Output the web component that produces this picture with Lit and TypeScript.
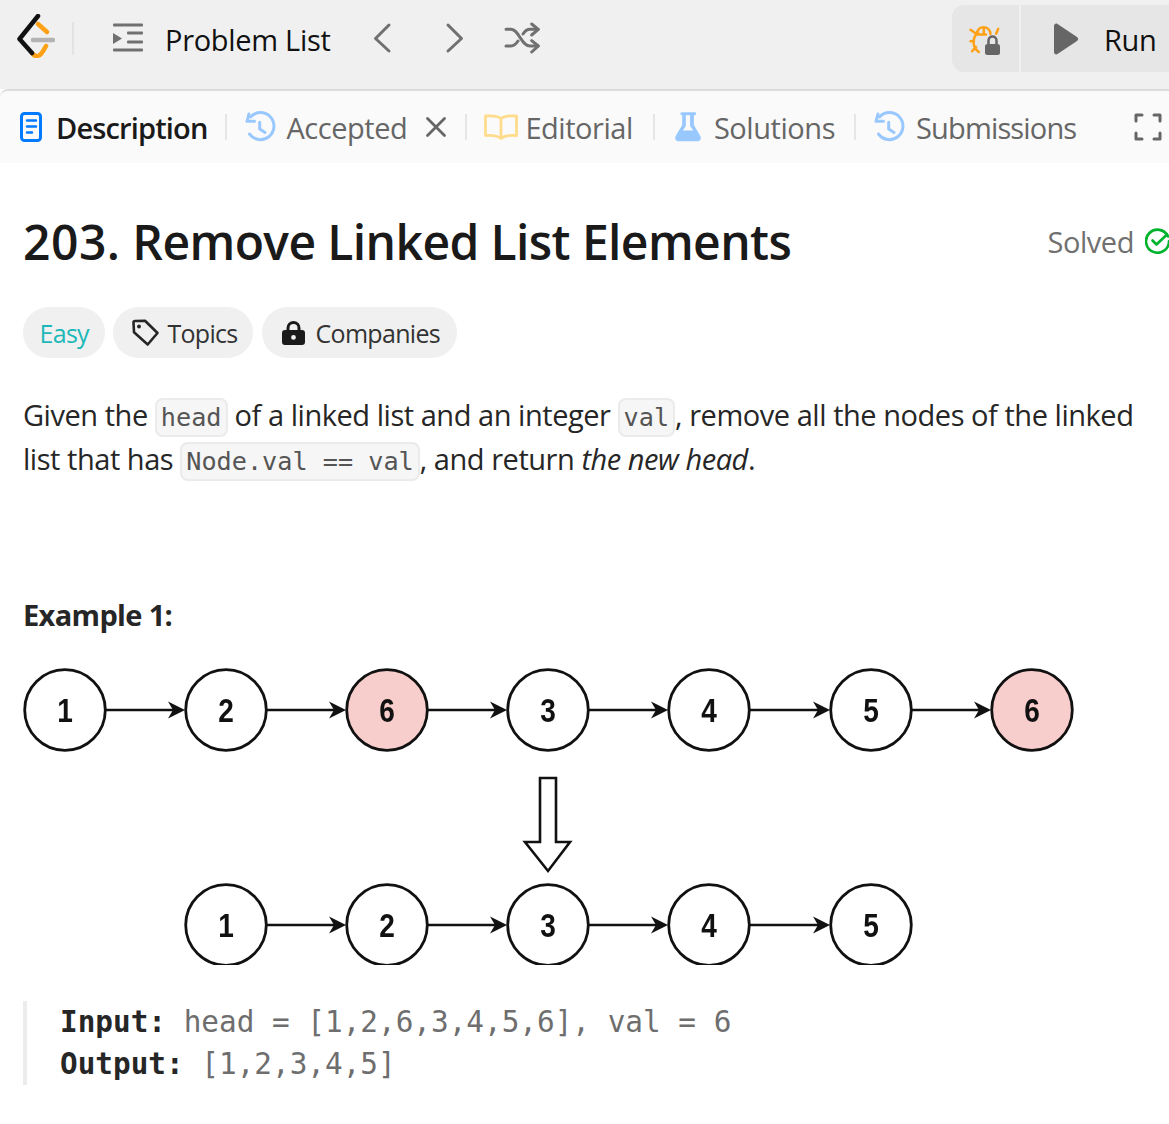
import { LitElement, css, html, svg } from 'lit'
import { customElement } from 'lit/decorators.js'

const historyIcon = html`<svg class="ic hist" width="32" height="32" viewBox="0 0 32 32" fill="none" stroke="#99c8ff" stroke-width="3" stroke-linecap="round" stroke-linejoin="round">
  <path d="M5.500 6A13.500 13.500 0 1 1 4.500 23" /><path d="M4 3 2 10.300h7.500" /><path d="M14.700 11.300V18l5.300 3.500" />
</svg>`

const nodes = (cy: number, items: [number, string, boolean?][]) => svg`
  ${items.slice(0, -1).map(([x], i) => svg`
    <line x1=${x + 41} y1=${cy} x2=${items[i + 1][0] - 50} y2=${cy} stroke="#111" stroke-width="2.600" />
    <path d="M${items[i + 1][0] - 58} ${cy - 8.5}L${items[i + 1][0] - 41} ${cy}L${items[i + 1][0] - 58} ${cy + 8.5}L${items[i + 1][0] - 53} ${cy}Z" fill="#111" />
  `)}
  ${items.map(([x, label, removed]) => svg`
    <circle cx=${x} cy=${cy} r="40.300" fill=${removed ? '#f8cecc' : '#fff'} stroke="#111" stroke-width="2.800" />
    <text transform="translate(${x} ${cy + 12}) scale(.85 1)" class="num" text-anchor="middle">${label}</text>
  `)}
`

@customElement('app-root')
export class AppRoot extends LitElement {
  static styles = css`
    :host {
      display: block;
      height: 1124px;
      overflow: hidden;
      background: #fff;
      color: #262626;
      font-family: 'Open Sans', 'Noto Sans', sans-serif;
    }

    svg { display: block; flex: none; }

    .topbar {
      display: flex;
      align-items: flex-start;
      height: 89px;
      background: #f0f0f0;
      padding: 5px 0 0 17px;
      box-sizing: border-box;
    }
    .logo { margin-top: 9px; }
    .vsep { width: 2px; height: 33px; background: #e3e3e3; margin: 17px 39px 0 17px; }
    .list-icon { margin-top: 17px; }
    .pl {
      font-size: 29px;
      font-weight: 500;
      letter-spacing: -0.3px;
      line-height: 40px;
      margin: 15px 0 0 21px;
      color: #111;
      width: 207px;
      flex: none;
    }
    .nav { margin-top: 16px; }
    .nav.next { margin-left: 53px; }
    .nav.shuffle { margin: 17px 0 0 39px; }

    .actions {
      display: flex;
      margin-left: auto;
      height: 67px;
      gap: 2px;
      width: 217px;
    }
    .actions > div {
      background: #e6e6e6;
      display: flex;
      align-items: center;
    }
    .debug { width: 67px; border-radius: 12px 0 0 12px; justify-content: center; }
    .run { flex: 1; padding-left: 30px; gap: 25px; font-size: 29px; font-weight: 500; letter-spacing: -0.3px; color: #111; }
    .run span { margin-top: 2px; }

    .tabs {
      display: flex;
      align-items: center;
      height: 74px;
      box-sizing: border-box;
      border-top: 2px solid #dcdcdc;
      border-radius: 8px 0 0 0;
      background: #fafafa;
      padding-left: 20px;
      font-size: 29px;
      letter-spacing: -0.45px;
      color: #666;
      white-space: nowrap;
    }
    .tabs .ic { margin-right: 10px; }
    .tabs .hist { margin-right: 9px; }
    .tabs .active { font-weight: 600; color: #1a1a1a; margin-left: 4px; letter-spacing: -0.85px; }
    .sep { width: 2px; height: 26px; background: #e6e6e6; margin: 0 18px; flex: none; }
    .sep.wide { margin: 0 20px; }
    .sep.last { margin-left: 19px; }
    .close { margin: 0 0 0 18px; }
    .tabs .book { margin: 0 7px 0 -1px; }
    .tabs .flask { margin-right: 13px; }
    .sub { margin-left: 1px; letter-spacing: -0.85px; }
    .full { margin-left: auto; margin-right: 7px; }

    .content { padding: 0 0 0 23px; }

    .head {
      display: flex;
      align-items: center;
      justify-content: space-between;
      margin-top: 45px;
      height: 68px;
    }
    h1 {
      margin: 0;
      font-size: 48px;
      font-weight: 600;
      letter-spacing: -0.6px;
      line-height: 68px;
      color: #1a1a1a;
      white-space: nowrap;
    }
    h1 span { letter-spacing: 0.5px; }
    .solved {
      display: flex;
      align-items: center;
      gap: 11px;
      font-size: 29px;
      letter-spacing: -0.45px;
      color: #707070;
      margin: 0 -1px 2px 0;
    }

    .tags { display: flex; gap: 8px; margin-top: 31px; }
    .tag {
      display: flex;
      align-items: center;
      gap: 7px;
      height: 51px;
      padding: 0 17px 0 19px;
      border-radius: 26px;
      background: #f0f0f0;
      font-size: 25px;
      letter-spacing: -0.7px;
      color: #333;
    }
    .tag.easy { color: #1cb8b8; padding: 0 16.500px; }
    .tag.topics { padding-right: 15px; }
    .tag.companies { margin-left: 1px; }
    .lock { margin: 0 4px 0 1px; }

    p {
      margin: 35px 0 0;
      font-size: 29px;
      line-height: 44px;
      letter-spacing: -0.46px;
      color: #262626;
    }
    code {
      font-family: 'DejaVu Sans Mono', monospace;
      font-size: 25.2px;
      line-height: 1;
      letter-spacing: 0;
      color: #555;
      background: #f6f6f6;
      border: 2px solid #ebebeb;
      border-radius: 8px;
      padding: 3px 4px;
    }
    em { font-style: italic; }

    .ex {
      margin-top: 114px;
      font-size: 29px;
      font-weight: 700;
      letter-spacing: -0.65px;
      line-height: 40px;
      color: #262626;
    }
    .diagram { margin-top: 30px; filter: blur(0.4px); }
    .num { font-family: 'Liberation Sans', Arial, sans-serif; font-weight: 700; font-size: 33px; fill: #111; }

    pre {
      margin: 36px 0 0;
      border-left: 4px solid #ececec;
      padding-left: 33px;
      font-family: 'DejaVu Sans Mono', monospace;
      font-size: 29.35px;
      line-height: 42px;
      color: #6e6e6e;
    }
    pre b { color: #262626; font-weight: 700; }
  `

  render() {
    return html`
      <div class="topbar">
        <svg class="logo" width="38" height="44" viewBox="0 0 38 44" fill="none" stroke-linecap="round" stroke-linejoin="round">
          <path d="M21 10 30 18" stroke="#ffa116" stroke-width="4.500" />
          <path d="M15 39c2 3 4.500 3.500 7 2.500 3-1.500 5-6 7-9.500" stroke="#ffa116" stroke-width="4.500" />
          <path d="M21 2 2.500 25 15 39" stroke="#111" stroke-width="4.500" />
          <path d="M16 26H36" stroke="#b3b3b3" stroke-width="4.500" />
        </svg>
        <div class="vsep"></div>
        <svg class="list-icon" width="31" height="32" viewBox="0 0 31 32" fill="#707070">
          <rect x="0" y="1.500" width="30" height="3" rx="1" />
          <rect x="14" y="9.500" width="16" height="3" rx="1" />
          <rect x="14" y="18.500" width="16" height="3" rx="1" />
          <rect x="0" y="26.500" width="30" height="3" rx="1" />
          <path d="M0 11 9 16.500 0 22Z" />
        </svg>
        <div class="pl">Problem List</div>
        <svg class="nav" width="20" height="34" viewBox="0 0 20 34" fill="none" stroke="#707070" stroke-width="3" stroke-linecap="round" stroke-linejoin="round"><path d="M17 4 3.500 17.500 17 30" /></svg>
        <svg class="nav next" width="20" height="34" viewBox="0 0 20 34" fill="none" stroke="#707070" stroke-width="3" stroke-linecap="round" stroke-linejoin="round"><path d="M3 4l13.500 13.500L3 30" /></svg>
        <svg class="nav shuffle" width="36" height="34" viewBox="0 0 36 34" fill="none" stroke="#707070" stroke-width="3" stroke-linecap="round" stroke-linejoin="round">
          <path d="M2 7.300h5c8 0 10 16.700 19 16.700h8" /><path d="M2 24h5c3 0 5-2 7-5M19 12c2-3 4-4.700 7-4.700h8" />
          <path d="M27.700 2l6.600 5.300L27.700 13" /><path d="M27.700 18.700l6.600 5.300-6.600 6" />
        </svg>
        <div class="actions">
          <div class="debug">
            <svg width="34" height="34" viewBox="0 0 34 34" fill="none" stroke-linecap="round" stroke-linejoin="round">
              <g stroke="#ffa116" stroke-width="2.500">
                <path d="M8 12c0-9 13-9 13.500 0M8 12.500h9M14.800 6v6.500M9 10c-6 6-6 15 .8 20M1.500 7.800l5 3.400M1.500 19.200H5M3.200 29.200 7 25M29.200 6.800l-2 5" />
              </g>
              <path d="M19.500 23v-4c0-6 8-6 8 0v4" stroke="#666" stroke-width="2.500" />
              <rect x="16" y="22" width="15" height="11" rx="2.500" fill="#666" />
            </svg>
          </div>
          <div class="run">
            <svg width="28" height="34" viewBox="0 0 28 34" fill="#666"><path d="M3 4c0-2 2-3 3.500-2L26 15c1.500 1 1.500 3 0 4L6.500 32C5 33 3 32 3 30Z" /></svg>
            <span>Run</span>
          </div>
        </div>
      </div>

      <div class="tabs">
        <svg class="ic" width="22" height="30" viewBox="0 0 22 30" fill="none" stroke="#007aff" stroke-linecap="round">
          <rect x="1.500" y="1.500" width="19" height="27" rx="3" stroke-width="3" />
          <path d="M7 8.500h9M7 14.500h9M7 20.500h5" stroke-width="2.500" />
        </svg>
        <span class="active">Description</span>
        <div class="sep"></div>
        ${historyIcon}<span>Accepted</span>
        <svg class="close" width="22" height="22" viewBox="0 0 22 22" stroke="#666" stroke-width="2.800" stroke-linecap="round"><path d="M2.500 2.500l17 17M19.500 2.500l-17 17" /></svg>
        <div class="sep"></div>
        <svg class="ic book" width="34" height="26" viewBox="0 0 34 26" fill="none" stroke="#ffdc8c" stroke-width="2.800" stroke-linejoin="round">
          <path d="M17 4.500C13 1.500 7 1.500 1.500 2v19.500c5.500-.5 11.500-.5 15.500 3 4-3.500 10-3.500 15.500-3V2C27 1.500 21 1.500 17 4.500ZM17 4.500v20" />
        </svg>
        <span>Editorial</span>
        <div class="sep wide"></div>
        <svg class="ic flask" width="26" height="30" viewBox="0 0 26.400 30" fill="#99c8ff">
          <path fill-rule="evenodd" d="M7 0h13a1.500 1.500 0 0 1 0 3h-.8v10L25.800 24.500c1.200 2.500-.3 5-3 5H3.600c-2.700 0-4.200-2.500-3-5L7.300 13V3H7A1.500 1.500 0 0 1 7 0ZM11 3v11L8 18.500h10.500L15.300 14V3Z" />
        </svg>
        <span>Solutions</span>
        <div class="sep last"></div>
        ${historyIcon}<span class="sub">Submissions</span>
        <svg class="full" width="28" height="28" viewBox="0 0 28 28" fill="none" stroke="#666" stroke-width="3" stroke-linecap="round" stroke-linejoin="round">
          <path d="M2 8V2h6M20 2h6v6M26 20v6h-6M8 26H2v-6" />
        </svg>
      </div>

      <div class="content">
        <div class="head">
          <h1><span>203.</span> Remove Linked List Elements</h1>
          <div class="solved">
            <span>Solved</span>
            <svg width="25" height="26" viewBox="0 0 25 26" fill="none" stroke="#00b32c" stroke-linecap="round" stroke-linejoin="round" stroke-width="2.600">
              <path d="M23 8.500A11.500 11.500 0 1 0 24 13" /><path d="M7.500 12.500l4 4L22 6.500" />
            </svg>
          </div>
        </div>

        <div class="tags">
          <div class="tag easy">Easy</div>
          <div class="tag topics">
            <svg width="28" height="28" viewBox="0 0 28 28" fill="none" stroke="#262626" stroke-width="2.600" stroke-linejoin="round">
              <path d="M1.500 3.500Q1.500 2 3 2L13 1.800 25.500 14 15.700 25.500 2 13.300Z" /><circle cx="7" cy="7.500" r="1.200" fill="#262626" stroke-width="1.500" />
            </svg>
            <span>Topics</span>
          </div>
          <div class="tag companies">
            <svg class="lock" width="23" height="24" viewBox="0 0 23 24" fill="#1a1a1a">
              <path d="M4.500 10V7a7 7 0 0 1 14 0v3h-3V7a4 4 0 0 0-8 0v3Z" />
              <path fill-rule="evenodd" d="M3 9h17a3 3 0 0 1 3 3v9a3 3 0 0 1-3 3H3a3 3 0 0 1-3-3v-9a3 3 0 0 1 3-3ZM11.500 14a2.400 2.400 0 1 0 0 4.800 2.400 2.400 0 0 0 0-4.800Z" />
            </svg>
            <span>Companies</span>
          </div>
        </div>

        <p>Given the <code>head</code> of a linked list and an integer <code>val</code>, remove all the nodes of the linked list that has <code>Node.val == val</code>, and return <em>the new head</em>.</p>

        <div class="ex">Example 1:</div>

        <svg class="diagram" width="1060" height="300" viewBox="0 0 1060 300">
          ${nodes(45, [[42, '1'], [203, '2'], [364, '6', true], [525, '3'], [686, '4'], [848, '5'], [1009, '6', true]])}
          <path d="M517 113h16v64h14l-22 29-23-29h15Z" fill="#fff" stroke="#111" stroke-width="2.600" stroke-linejoin="miter" />
          ${nodes(260, [[203, '1'], [364, '2'], [525, '3'], [686, '4'], [848, '5']])}
        </svg>

        <pre><b>Input:</b> head = [1,2,6,3,4,5,6], val = 6
<b>Output:</b> [1,2,3,4,5]</pre>
      </div>
    `
  }
}
